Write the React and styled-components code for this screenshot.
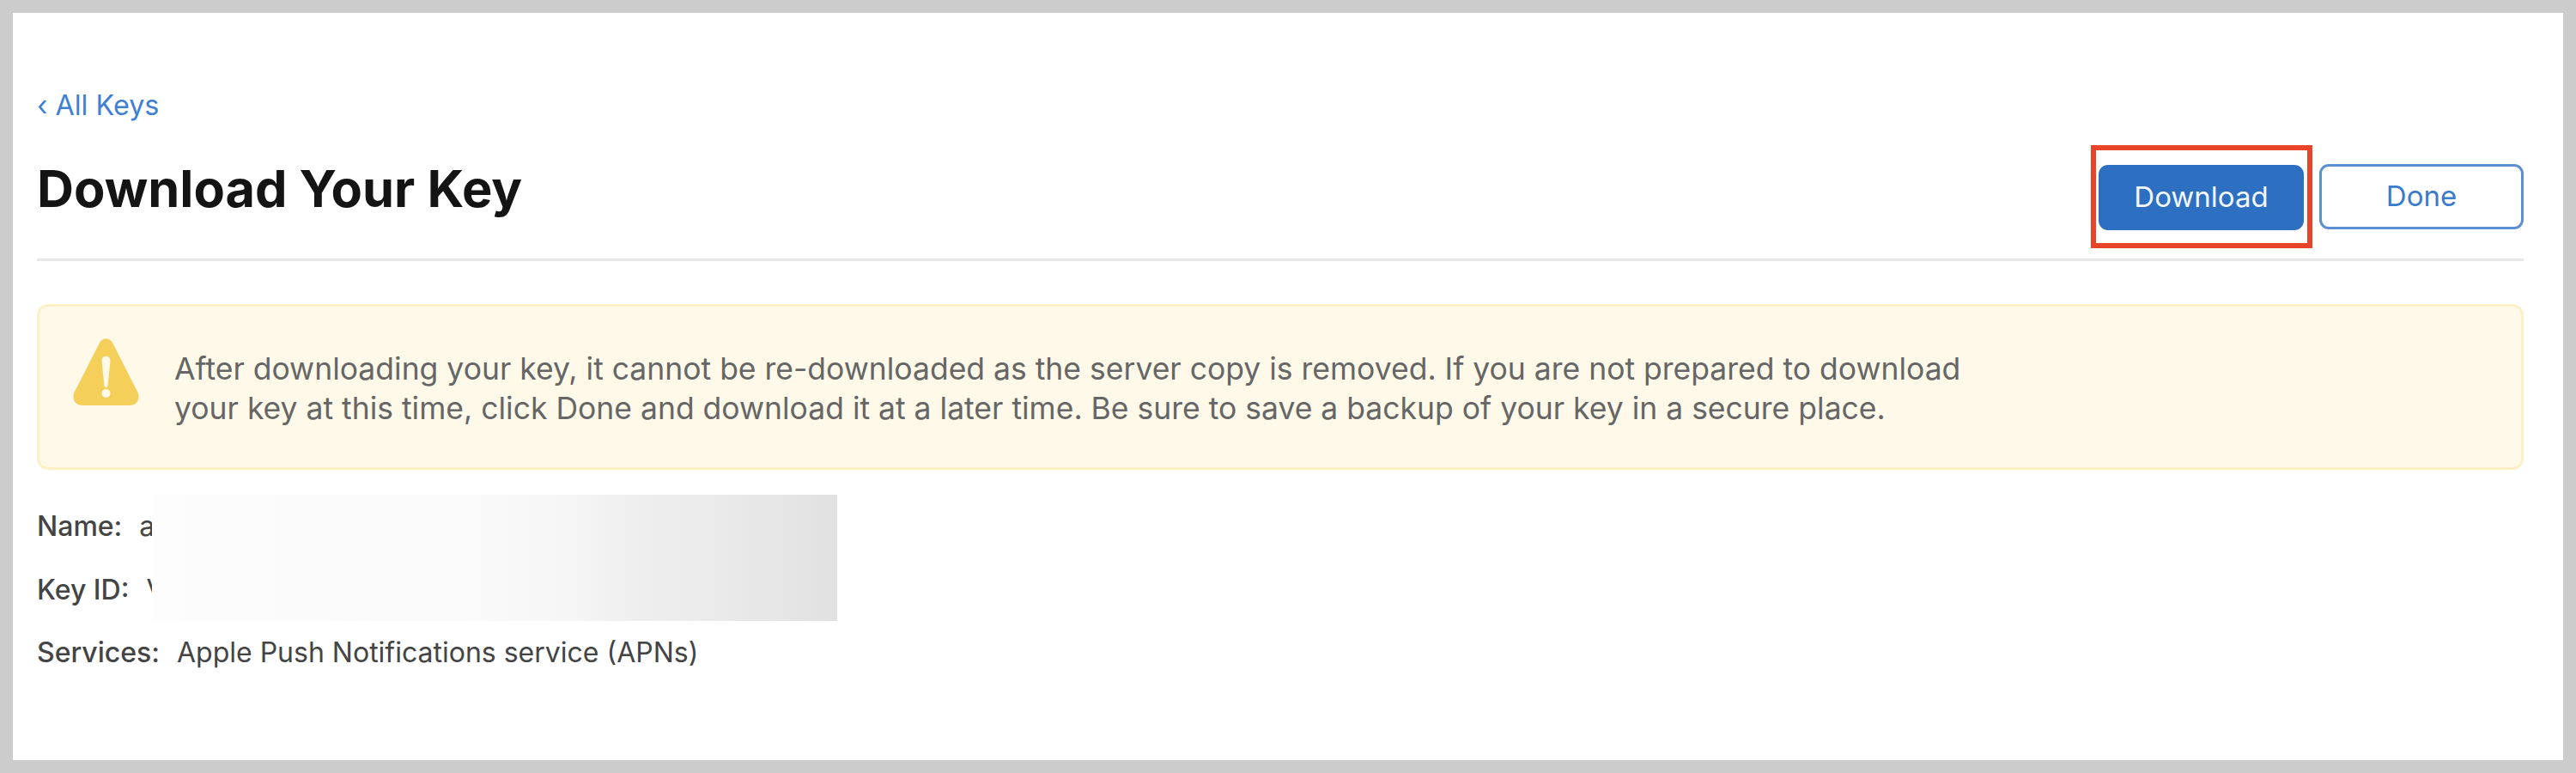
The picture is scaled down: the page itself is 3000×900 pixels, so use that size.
import React from "react";
import styled, { createGlobalStyle } from "styled-components";

const Global = createGlobalStyle`
  html, body { margin: 0; padding: 0; background: #fff; }
  * { box-sizing: border-box; }
`;

const Frame = styled.div`
  width: 3000px;
  height: 900px;
  border: 15px solid #cccccc;
  background: #fff;
  padding: 88px 46px 0 28px;
  font-family: Inter, "Liberation Sans", sans-serif;
  overflow: hidden;
`;

const BackLink = styled.a`
  display: block;
  height: 40px;
  line-height: 40px;
  margin-bottom: 26px;
  font-size: 32.3px;
  color: #3f80d2;
  text-decoration: none;
`;

const Header = styled.header`
  display: flex;
  justify-content: space-between;
  align-items: flex-start;
  padding-bottom: 12px;
  border-bottom: 3px solid #e8e8e8;
`;

const Title = styled.h1`
  margin: 15px 0 0;
  font-size: 59.5px;
  line-height: 70px;
  font-weight: 700;
  color: #141414;
`;

const Actions = styled.div`
  display: flex;
  align-items: center;
  gap: 8px;
`;

const Highlight = styled.div`
  border: 6px solid #e8442a;
  padding: 17px 4px 15px 3px;
`;

const Button = styled.button`
  display: block;
  width: ${(p) => (p.$primary ? "239px" : "238px")};
  height: 76px;
  border-radius: 11px;
  border: 3px solid ${(p) => (p.$primary ? "#2d6fc1" : "#5a90d2")};
  background: ${(p) => (p.$primary ? "#2d6fc1" : "#fff")};
  color: ${(p) => (p.$primary ? "#f2f6fc" : "#3a7bcc")};
  font-family: inherit;
  font-size: 33px;
  padding: 0 0 2px;
`;

const Banner = styled.section`
  display: flex;
  align-items: flex-start;
  gap: 41px;
  height: 193px;
  margin-top: 50px;
  padding: 36px 0 0 39px;
  background: #fef9e8;
  border: 3px solid #fdf0c6;
  border-radius: 13px;
`;

const BannerText = styled.p`
  margin: 14px 0 0;
  width: 2130px;
  font-size: 35.5px;
  line-height: 46px;
  color: #666666;
`;

const Details = styled.dl`
  position: relative;
  margin: 29px 0 0;
`;

const Row = styled.div`
  display: flex;
  height: 73.5px;
  line-height: 73.5px;
  font-size: 32px;
  color: #444444;
`;

const Label = styled.dt`
  font-weight: 500;
  margin-right: 20px;
`;

const Value = styled.dd`
  margin: 0;
`;

const Redaction = styled.div`
  position: absolute;
  left: 134px;
  top: 0;
  width: 798px;
  height: 147px;
  background: linear-gradient(90deg, #fdfdfd 0%, #fafafa 45%, #f6f6f6 61%, #f0f0f0 68%, #e9e9e9 85%, #e1e1e1 100%);
`;

const WarningIcon = () => (
  <svg width="77" height="79" viewBox="0 0 77 79" style={{ flex: "none" }}>
    <path
      d="M31 6 C34.5 -0.5 42.5 -0.5 46 6 L75 63 C79 71 74.5 79 66 79 L11 79 C2.5 79 -2 71 2 63 Z"
      fill="#f4d05a"
    />
    <path d="M33.5 27 C33.5 20 43.5 20 43.5 27 L40.6 56 C40.4 58.5 36.6 58.5 36.4 56 Z" fill="#fef9e8" />
    <circle cx="38.5" cy="65" r="5" fill="#fef9e8" />
  </svg>
);

export default function App() {
  return (
    <>
      <Global />
      <Frame>
        <BackLink href="#">‹ All Keys</BackLink>
        <Header>
          <Title>Download Your Key</Title>
          <Actions>
            <Highlight>
              <Button $primary>Download</Button>
            </Highlight>
            <Button>Done</Button>
          </Actions>
        </Header>
        <Banner>
          <WarningIcon />
          <BannerText>
            After downloading your key, it cannot be re-downloaded as the server copy is removed. If you are not prepared to download your key at this time, click Done and download it at a later time. Be sure to save a backup of your key in a secure place.
          </BannerText>
        </Banner>
        <Details>
          <Row><Label>Name:</Label><Value>a</Value></Row>
          <Row><Label>Key ID:</Label><Value>V</Value></Row>
          <Row><Label>Services:</Label><Value>Apple Push Notifications service (APNs)</Value></Row>
          <Redaction />
        </Details>
      </Frame>
    </>
  );
}
